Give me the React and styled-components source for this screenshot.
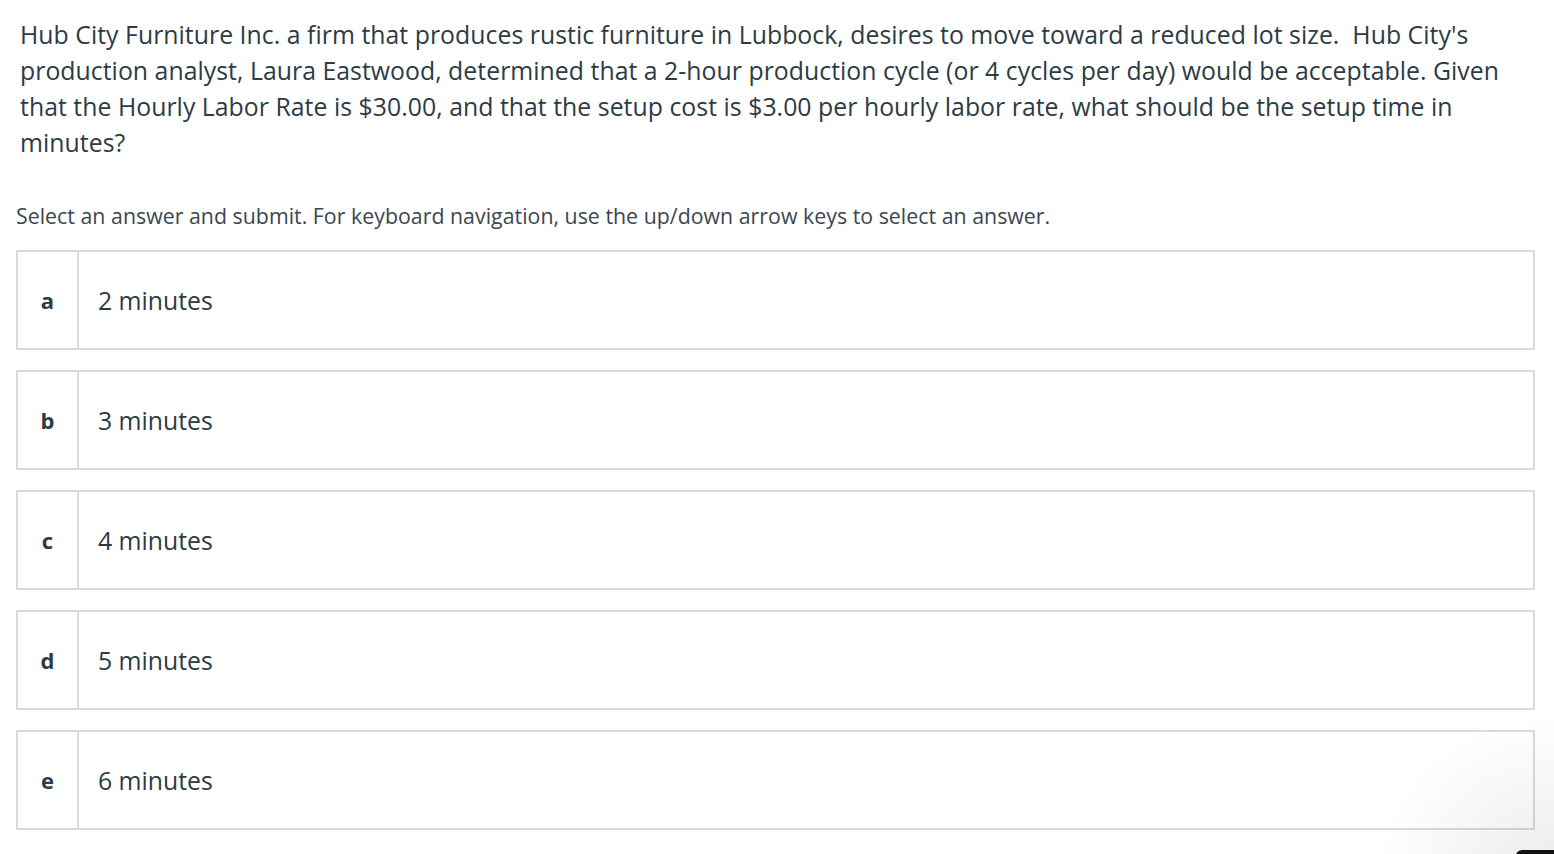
import React from "react";
import styled, { createGlobalStyle } from "styled-components";

const Global = createGlobalStyle`
  html, body { margin: 0; padding: 0; background: #fff; }
  body { font-family: "Open Sans", "Noto Sans", sans-serif; color: #2d3b45; }
`;

const Page = styled.div`
  padding: 16px 19px 0 16px;
  position: relative;
  min-height: 854px;
  box-sizing: border-box;
  overflow: hidden;
`;

const Question = styled.p`
  margin: 0 0 0 4px;
  max-width: 1500px;
  font-size: 24.8px;
  line-height: 36px;
  letter-spacing: 0.04px;
`;

const Instructions = styled.p`
  margin: 41px 0 19px 0;
  font-size: 21.3px;
  line-height: 30px;
  color: #3b4650;
  letter-spacing: 0.03px;
`;

const Options = styled.div`
  display: flex;
  flex-direction: column;
  gap: 20px;
`;

const Option = styled.div`
  display: grid;
  grid-template-columns: 61px 1fr;
  height: 100px;
  box-sizing: border-box;
  border: 2px solid #d9dcdf;
  background: #fff;
`;

const Letter = styled.div`
  display: flex;
  align-items: center;
  justify-content: center;
  border-right: 2px solid #d9dcdf;
  font-weight: 700;
  font-size: 22px;
  padding-bottom: 1px;
`;

const Answer = styled.div`
  display: flex;
  align-items: center;
  padding-left: 19px;
  font-size: 24.8px;
  padding-bottom: 1px;
`;

const Shadow = styled.div`
  position: absolute;
  right: -40px;
  bottom: -40px;
  width: 220px;
  height: 180px;
  background: radial-gradient(ellipse at 80% 90%, rgba(0,0,0,0.08), rgba(0,0,0,0) 70%);
  pointer-events: none;
`;

const Pill = styled.div`
  position: absolute;
  right: -20px;
  bottom: -6px;
  width: 58px;
  height: 10px;
  border-radius: 6px 6px 0 0;
  background: #111;
`;

const answers = [
  ["a", "2 minutes"],
  ["b", "3 minutes"],
  ["c", "4 minutes"],
  ["d", "5 minutes"],
  ["e", "6 minutes"],
];

export default function App() {
  return (
    <Page>
      <Global />
      <Question>
        Hub City Furniture Inc. a firm that produces rustic furniture in Lubbock, desires to move toward a reduced lot size.&nbsp; Hub City's production analyst, Laura Eastwood, determined that a 2-hour production cycle (or 4 cycles per day) would be acceptable. Given that the Hourly Labor Rate is $30.00, and that the setup cost is $3.00 per hourly labor rate, what should be the setup time in minutes?
      </Question>
      <Instructions>
        Select an answer and submit. For keyboard navigation, use the up/down arrow keys to select an answer.
      </Instructions>
      <Options>
        {answers.map(([l, t]) => (
          <Option key={l}>
            <Letter>{l}</Letter>
            <Answer>{t}</Answer>
          </Option>
        ))}
      </Options>
      <Shadow />
      <Pill />
    </Page>
  );
}
